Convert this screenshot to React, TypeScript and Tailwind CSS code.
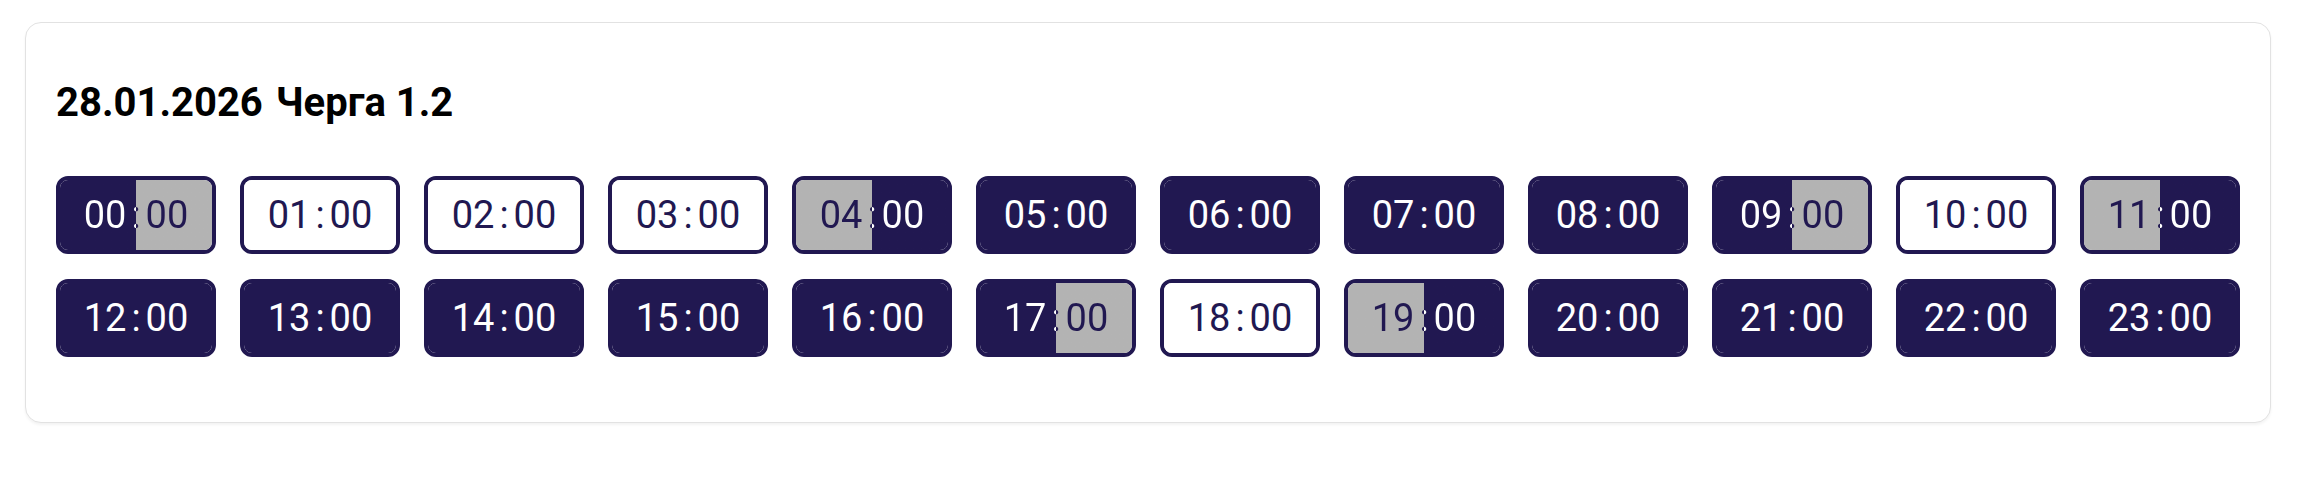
type Slot = {
  hour: string;
  left: "navy" | "gray" | "white";
  right: "navy" | "gray" | "white";
};

// n = navy, g = gray, w = white  (left half / right half)
const pattern: [string, string][] = [
  ["n", "g"], ["w", "w"], ["w", "w"], ["w", "w"], ["g", "n"], ["n", "n"],
  ["n", "n"], ["n", "n"], ["n", "n"], ["n", "g"], ["w", "w"], ["g", "n"],
  ["n", "n"], ["n", "n"], ["n", "n"], ["n", "n"], ["n", "n"], ["n", "g"],
  ["w", "w"], ["g", "n"], ["n", "n"], ["n", "n"], ["n", "n"], ["n", "n"],
];

const named = { n: "navy", g: "gray", w: "white" } as const;

const slots: Slot[] = pattern.map(([l, r], i) => ({
  hour: String(i).padStart(2, "0"),
  left: named[l as keyof typeof named],
  right: named[r as keyof typeof named],
}));

const bgClass = (s: Slot) => {
  const key = `${s.left}-${s.right}`;
  switch (key) {
    case "navy-gray":
      return "bg-linear-to-r from-[#211851] from-50% to-[#b3b3b3] to-50%";
    case "gray-navy":
      return "bg-linear-to-r from-[#b3b3b3] from-50% to-[#211851] to-50%";
    case "white-white":
      return "bg-white";
    default:
      return "bg-[#211851]";
  }
};

const textClass = (s: Slot) => {
  const key = `${s.left}-${s.right}`;
  switch (key) {
    case "navy-gray":
      return "bg-linear-to-r from-white from-50% to-[#211851] to-50% bg-clip-text text-transparent";
    case "gray-navy":
      return "bg-linear-to-r from-[#211851] from-50% to-white to-50% bg-clip-text text-transparent";
    case "white-white":
      return "text-[#211851]";
    default:
      return "text-white";
  }
};

const HourButton = ({ slot }: { slot: Slot }) => (
  <button className="h-[78px] rounded-[12px] border-[4px] border-[#211851] bg-white p-0">
    <div className={`flex h-full w-full items-center rounded-[8px] ${bgClass(slot)}`}>
      <span
        className={`block w-full text-center text-[38px] leading-[40px] font-normal ${textClass(slot)}`}
      >
        {slot.hour}
        <span className="mx-[5px]">:</span>
        00
      </span>
    </div>
  </button>
);

export default function App() {
  return (
    <div className="min-h-[489px] bg-white pt-[22px] pl-[25px] font-['Roboto',sans-serif]">
      <div className="w-[2246px] rounded-[16px] border border-[#e2e2e2] bg-white px-[30px] pt-[60px] pb-[65px] shadow-[0_2px_3px_rgba(0,0,0,0.05)]">
        <h2 className="text-[40px] leading-[40px] font-bold text-black">
          <span>28.01.2026</span>
          <span className="ml-[13px]">Черга 1.2</span>
        </h2>
        <div className="mt-[53px] grid grid-cols-12 gap-x-[24px] gap-y-[25px]">
          {slots.map((s) => (
            <HourButton key={s.hour} slot={s} />
          ))}
        </div>
      </div>
    </div>
  );
}
